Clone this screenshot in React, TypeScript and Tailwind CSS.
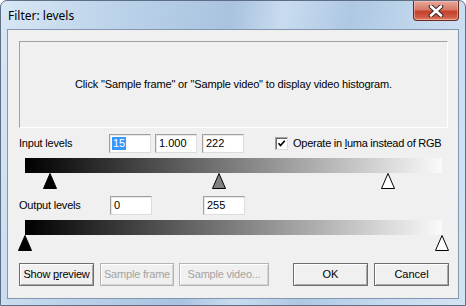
import React from "react";

const ui = { fontFamily: '"Liberation Sans", Arial, sans-serif' };
const TRACK_W = 417;

function pos(v: number) {
  return (v / 255) * TRACK_W;
}

function EditBox({ value, selected }: { value: string; selected?: boolean }) {
  return (
    <div className="w-[42px] h-[19px] bg-white border border-t-[#a0a0a0] border-l-[#a0a0a0] border-b-[#dcdcdc] border-r-[#dcdcdc] shadow-[inset_1px_1px_0_#e8e8e8] flex items-center pl-[2px] text-[11px] leading-none text-black">
      {selected ? (
        <span className="bg-[#3399ff] text-white px-[1px] py-[1px]">{value}</span>
      ) : (
        <span className="px-[1px]">{value}</span>
      )}
    </div>
  );
}

function Marker({ x, fill }: { x: number; fill: string }) {
  return (
    <svg
      width="14"
      height="16"
      viewBox="0 0 14 16"
      className="absolute top-0"
      style={{ left: x - 7 }}
    >
      <polygon points="7,0.5 13.5,15.5 0.5,15.5" fill={fill} stroke="#000" strokeWidth="1" />
    </svg>
  );
}

function Slider({ markers }: { markers: { v: number; fill: string }[] }) {
  return (
    <div className="ml-[17px] w-[417px] flex flex-col">
      <div className="h-[15px] bg-[linear-gradient(to_right,#000,#fafafa)]" />
      <div className="relative h-[16px]">
        {markers.map((m, i) => (
          <Marker key={i} x={m.v} fill={m.fill} />
        ))}
      </div>
    </div>
  );
}

function Button({
  children,
  disabled,
  width,
}: {
  children: React.ReactNode;
  disabled?: boolean;
  width: string;
}) {
  return (
    <div
      className={`${width} h-[23px] flex items-center justify-center text-[11px] bg-[#f0f0f0] border ${
        disabled
          ? "border-[#b4b4b4] text-[#a3a3a3] shadow-[inset_1px_1px_0_#fff,inset_-1px_-1px_0_#d4d4d4]"
          : "border-[#6e6e6e] text-black shadow-[inset_1px_1px_0_#fff,inset_-1px_-1px_0_#a8a8a8]"
      }`}
    >
      {children}
    </div>
  );
}

export default function App() {
  const inBlack = 15;
  const inWhite = 222;
  const gray = (pos(inBlack) + pos(inWhite)) / 2;

  return (
    <div className="w-[466px] h-[306px] flex flex-col rounded-t-[7px] border border-[#5d6e85] bg-[linear-gradient(100deg,#d9e7f5_0%,#bcd3ea_22%,#a9c3df_45%,#c9dcef_55%,#aec8e3_68%,#c6daef_85%,#d4e3f3_100%)] overflow-hidden">
      <div className="h-[28px] flex items-start justify-between">
        <div className="pl-[7px] pt-[6px] text-[12px] text-black" style={{ fontFamily: '"Noto Sans", "Open Sans", sans-serif' }}>
          Filter: levels
        </div>
        <div className="mr-[6px] w-[46px] h-[20px] rounded-b-[4px] border border-t-0 border-[#6b2a21] bg-[linear-gradient(to_bottom,#e9a99c_0%,#d77a66_45%,#c4412b_55%,#cf5a43_85%,#e08a72_100%)] shadow-[inset_0_0_0_1px_rgba(255,210,200,0.45)] flex items-center justify-center">
          <svg width="16" height="12" viewBox="0 0 16 12">
            <path d="M3 1.5 L13 10.5 M13 1.5 L3 10.5" stroke="#3b2a2a" strokeWidth="4.6" strokeLinecap="round" />
            <path d="M3 1.5 L13 10.5 M13 1.5 L3 10.5" stroke="#fff" strokeWidth="2.6" strokeLinecap="round" />
          </svg>
        </div>
      </div>

      <div className="mx-[6px] mb-[6px] flex-1 border border-[#8497b0] bg-[#f0f0f0] flex flex-col text-black" style={ui}>
        <div className="ml-[11px] mt-[11px] w-[429px] h-[87px] border border-t-[#a0a0a0] border-l-[#a0a0a0] border-b-white border-r-white flex items-center justify-center text-[11px] tracking-[-0.15px]">
          Click "Sample frame" or "Sample video" to display video histogram.
        </div>

        <div className="mt-[6px] h-[19px] flex items-center text-[11px]">
          <span className="ml-[11px] w-[90px] tracking-[-0.2px]">Input levels</span>
          <EditBox value="15" selected />
          <div className="w-[4px]" />
          <EditBox value="1.000" />
          <div className="w-[5px]" />
          <EditBox value="222" />
          <div className="ml-[31px] flex items-center gap-[5px]">
            <div className="w-[13px] h-[13px] bg-white border border-t-[#a0a0a0] border-l-[#a0a0a0] border-b-[#dcdcdc] border-r-[#dcdcdc] shadow-[inset_1px_1px_0_#696969] flex items-center justify-center">
              <svg width="9" height="9" viewBox="0 0 9 9">
                <path d="M1.5 4.2 L3.5 6.5 L7.8 1.8" stroke="#000" strokeWidth="1.7" fill="none" />
              </svg>
            </div>
            <span className="tracking-[-0.25px]">
              Operate in <span className="underline">l</span>uma instead of RGB
            </span>
          </div>
        </div>

        <div className="mt-[5px]">
          <Slider
            markers={[
              { v: pos(inBlack), fill: "#000" },
              { v: gray, fill: "#808080" },
              { v: pos(inWhite), fill: "#fff" },
            ]}
          />
        </div>

        <div className="mt-[7px] h-[19px] flex items-center text-[11px]">
          <span className="ml-[11px] w-[91px] tracking-[-0.2px]">Output levels</span>
          <EditBox value="0" />
          <div className="w-[51px]" />
          <EditBox value="255" />
        </div>

        <div className="mt-[5px]">
          <Slider
            markers={[
              { v: pos(0), fill: "#000" },
              { v: pos(255), fill: "#fff" },
            ]}
          />
        </div>

        <div className="mt-[12px] ml-[11px] flex items-center">
          <Button width="w-[75px]">
            <span className="tracking-[-0.2px]">
              Show <span className="underline">p</span>review
            </span>
          </Button>
          <div className="w-[6px]" />
          <Button width="w-[74px]" disabled>
            <span className="tracking-[-0.2px]">Sample frame</span>
          </Button>
          <div className="w-[5px]" />
          <Button width="w-[90px]" disabled>
            <span className="tracking-[-0.2px]">Sample video...</span>
          </Button>
          <div className="w-[24px]" />
          <Button width="w-[75px]">OK</Button>
          <div className="w-[6px]" />
          <Button width="w-[75px]">Cancel</Button>
        </div>
      </div>
    </div>
  );
}
